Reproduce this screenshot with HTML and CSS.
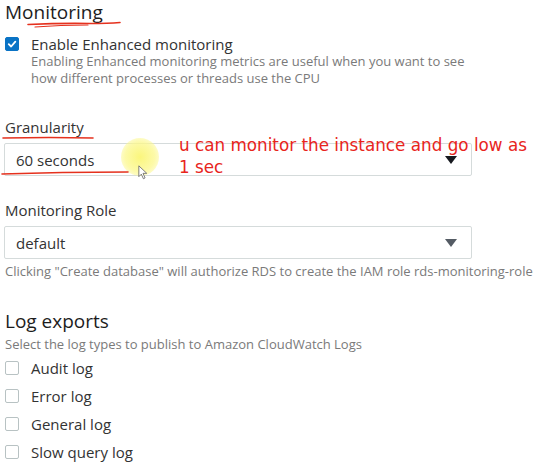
FILE: index.html
```html
<!DOCTYPE html>
<html>
<head>
<meta charset="utf-8">
<link rel="stylesheet" href="styles.css">
</head>
<body>
<div class="page">
  <section class="section">
    <h2 class="heading">Monitoring</h2>
    <div class="check-row check-top">
      <span class="box checked">
        <svg viewBox="0 0 14 14" width="14" height="14"><path d="M3.2 7.2 L6 9.9 L10.9 4.2" fill="none" stroke="#fff" stroke-width="2.1" stroke-linecap="round" stroke-linejoin="round"/></svg>
      </span>
      <div class="check-text">
        <div class="label">Enable Enhanced monitoring</div>
        <div class="desc">Enabling Enhanced monitoring metrics are useful when you want to see how different processes or threads use the CPU</div>
      </div>
    </div>
  </section>

  <section class="field granularity">
    <div class="label">Granularity</div>
    <div class="select"><span>60 seconds</span><span class="arrow dark"></span></div>
  </section>

  <section class="field role">
    <div class="label">Monitoring Role</div>
    <div class="select"><span>default</span><span class="arrow"></span></div>
    <div class="help">Clicking "Create database" will authorize RDS to create the IAM role rds-monitoring-role</div>
  </section>

  <section class="section logs">
    <h2 class="heading">Log exports</h2>
    <div class="help sub">Select the log types to publish to Amazon CloudWatch Logs</div>
    <div class="log-list">
      <div class="check-row"><span class="box"></span><span class="label">Audit log</span></div>
      <div class="check-row"><span class="box"></span><span class="label">Error log</span></div>
      <div class="check-row"><span class="box"></span><span class="label">General log</span></div>
      <div class="check-row"><span class="box"></span><span class="label">Slow query log</span></div>
    </div>
  </section>

  <div class="annotation">u can monitor the instance and go low as<br>1 sec</div>
  <div class="highlight"></div>
  <svg class="cursor" viewBox="0 0 12 18" width="10" height="15"><path d="M1 1 L1 14 L4 11 L6.5 16.5 L8.5 15.5 L6 10 L10.5 10 Z" fill="#fff" stroke="#666" stroke-width="1"/></svg>
  <svg class="ink" width="540" height="463" viewBox="0 0 540 463">
    <path d="M28 24.5 Q60 23 90 23.5 Q108 23.5 120 22.5" fill="none" stroke="#e5311e" stroke-width="1.6" stroke-linecap="round"/>
    <path d="M35 27 Q60 25 88 25" fill="none" stroke="#e5311e" stroke-width="1.1" stroke-linecap="round"/>
    <path d="M3 138 Q50 137 93 138" fill="none" stroke="#e5311e" stroke-width="1.6" stroke-linecap="round"/>
    <path d="M2 174 Q60 172 128 172" fill="none" stroke="#e5311e" stroke-width="1.6" stroke-linecap="round"/>
  </svg>
</div>
</body>
</html>
```
FILE: styles.css
```css
* { box-sizing: border-box; }
html, body { margin: 0; padding: 0; background: #fff; }
body {
  font-family: "Open Sans", "Noto Sans", sans-serif;
  color: #333;
  width: 540px;
  height: 463px;
  overflow: hidden;
}
.page {
  position: relative;
  width: 540px;
  height: 463px;
  padding: 0 0 0 5px;
}
.heading {
  margin: 0;
  font-size: 19px;
  font-weight: 400;
  line-height: 24px;
  color: #1d1d1d;
}
.check-row {
  display: flex;
  align-items: flex-start;
  gap: 12px;
}
.check-top { margin-top: 12px; }
.box {
  flex: none;
  width: 14px;
  height: 14px;
  border: 1px solid #b8c2c3;
  border-radius: 2px;
  background: #fff;
  display: flex;
  align-items: center;
  justify-content: center;
  margin-top: 1px;
}
.box.checked {
  background: #0a73c5;
  border-color: #0a73c5;
}
.box.checked svg { display: block; }
.label {
  font-size: 15px;
  line-height: 18px;
  color: #333;
}
.check-top .label { line-height: 17px; }
.desc {
  font-size: 13px;
  line-height: 17px;
  color: #7a7a7a;
  margin-top: 0;
  max-width: 440px;
}
.field .label { margin-bottom: 7px; }
.granularity { margin-top: 31px; }
.role { margin-top: 25px; }
.select {
  width: 468px;
  height: 33px;
  margin-left: -1px;
  border: 1px solid #d5dbdb;
  border-radius: 2px;
  display: flex;
  align-items: center;
  justify-content: space-between;
  padding: 0 14px 0 11px;
  font-size: 15px;
  color: #333;
}
.arrow {
  width: 0;
  height: 0;
  border-left: 6px solid transparent;
  border-right: 6px solid transparent;
  border-top: 8px solid #545b64;
}
.arrow.dark { border-top-color: #16191f; }
.help {
  font-size: 13px;
  line-height: 16px;
  color: #7a7a7a;
  margin-top: 4px;
}
.logs { margin-top: 30px; }
.help.sub { margin-top: 3px; }
.log-list {
  margin-top: 7px;
  display: flex;
  flex-direction: column;
  gap: 10px;
}
.log-list .box { margin-top: 2px; }
.annotation {
  position: absolute;
  left: 179px;
  top: 134px;
  font-family: "DejaVu Sans", sans-serif;
  font-size: 16.8px;
  line-height: 22px;
  color: #e8251c;
}
.highlight {
  position: absolute;
  left: 121px;
  top: 138px;
  width: 38px;
  height: 38px;
  border-radius: 50%;
  background: radial-gradient(circle, rgba(250,245,110,0.9) 0%, rgba(252,248,140,0.75) 55%, rgba(255,255,200,0) 100%);
}
.cursor {
  position: absolute;
  left: 138px;
  top: 165px;
}
.ink {
  position: absolute;
  left: 0;
  top: 0;
  pointer-events: none;
}
```
